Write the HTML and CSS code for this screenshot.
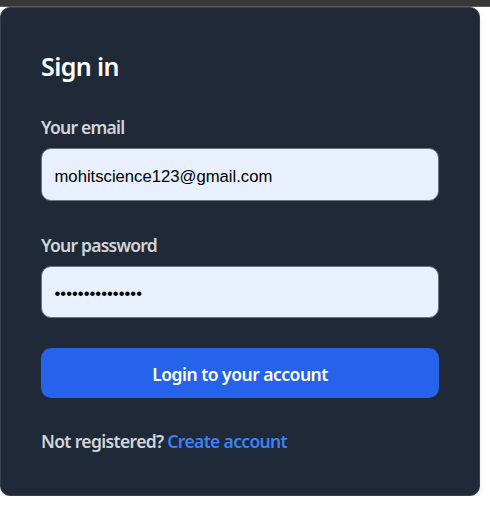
FILE: index.html
```html
<!DOCTYPE html>
<html lang="en">
<head>
<meta charset="utf-8">
<title>Sign in</title>
<link rel="stylesheet" href="styles.css">
</head>
<body>
<div class="topbar"></div>
<div class="card">
  <form class="form">
    <h5 class="title">Sign in</h5>
    <div class="field">
      <label class="label" for="email">Your email</label>
      <input class="input" type="email" id="email" value="mohitscience123@gmail.com">
    </div>
    <div class="field">
      <label class="label" for="password">Your password</label>
      <input class="input" type="password" id="password" value="mohitscience123">
    </div>
    <button class="btn" type="button">Login to your account</button>
    <div class="footer">Not registered? <a class="link" href="#">Create account</a></div>
  </form>
</div>
</body>
</html>
```
FILE: styles.css
```css
* { box-sizing: border-box; }
html, body { margin: 0; padding: 0; background: #ffffff; }
body { font-family: "Noto Sans", "Open Sans", sans-serif; }
.topbar {
  height: 7px;
  background: #383838;
  border-bottom: 1px solid #5c5c5c;
}
.card {
  width: 480px;
  background: #1f2937;
  border: 1px solid #374151;
  border-radius: 10px;
  padding: 40px 40px 41px;
  box-shadow: 0 5px 8px -2px rgba(0,0,0,0.12), 0 2px 4px -2px rgba(0,0,0,0.1);
}
.form { display: flex; flex-direction: column; gap: 30px; margin: 0; }
.title {
  margin: 0;
  padding-top: 1px;
  font-size: 25px;
  line-height: 34px;
  font-weight: 600;
  letter-spacing: -0.6px;
  color: #ffffff;
}
.field { display: flex; flex-direction: column; }
.label {
  padding-top: 2px;
  font-size: 17.5px;
  line-height: 25px;
  font-weight: 600;
  letter-spacing: -0.75px;
  color: #d1d5db;
  margin-bottom: 8px;
}
.input {
  width: 100%;
  height: 52.5px;
  background: #e8f0fe;
  border: 1px solid #6b7280;
  border-radius: 10px;
  padding: 5px 12.5px 0;
  font-family: "Liberation Sans", Arial, sans-serif;
  font-size: 16.67px;
  color: #000000;
  outline: none;
}
.btn {
  width: 100%;
  height: 50px;
  padding-top: 3px;
  background: #2563eb;
  color: #ffffff;
  border: none;
  border-radius: 10px;
  font-family: "Noto Sans", "Open Sans", sans-serif;
  font-size: 17.5px;
  font-weight: 600;
  letter-spacing: -0.5px;
  cursor: pointer;
}
.footer {
  padding-top: 1px;
  font-size: 17.5px;
  line-height: 25px;
  font-weight: 600;
  letter-spacing: -0.65px;
  color: #d1d5db;
}
.link { color: #3b82f6; text-decoration: none; }
```
